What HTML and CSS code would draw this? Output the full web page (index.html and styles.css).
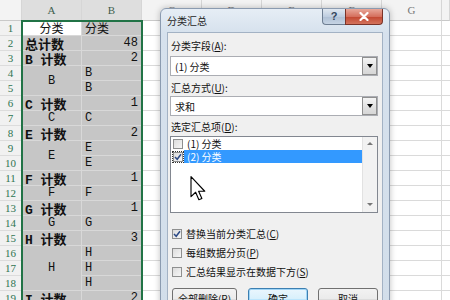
FILE: index.html
```html
<!DOCTYPE html>
<html lang="zh-CN">
<head>
  <meta charset="UTF-8">
  <title>分类汇总</title>
  <link rel="stylesheet" href="styles.css">
</head>
<body>
  <div class="sheet">
    <div class="hd corner"></div>
    <div class="hd on">A</div>
    <div class="hd on">B</div>
    <div class="hd">C</div>
    <div class="hd">D</div>
    <div class="hd">E</div>
    <div class="hd">F</div>
    <div class="hd">G</div>
    <div class="hd"></div>

    <div class="rest"></div>

    <div class="rn">1</div><div class="cell a act c">分类</div><div class="cell b">分类</div>
    <div class="rn">2</div><div class="cell a bold">总计数</div><div class="cell b r">48</div>
    <div class="rn">3</div><div class="cell a bold">B&nbsp;计数</div><div class="cell b r">2</div>
    <div class="rn">4</div><div class="cell a c span2">B</div><div class="cell b">B</div>
    <div class="rn">5</div><div class="cell b">B</div>
    <div class="rn">6</div><div class="cell a bold">C&nbsp;计数</div><div class="cell b r">1</div>
    <div class="rn">7</div><div class="cell a c">C</div><div class="cell b">C</div>
    <div class="rn">8</div><div class="cell a bold">E&nbsp;计数</div><div class="cell b r">2</div>
    <div class="rn">9</div><div class="cell a c span2">E</div><div class="cell b">E</div>
    <div class="rn">10</div><div class="cell b">E</div>
    <div class="rn">11</div><div class="cell a bold">F&nbsp;计数</div><div class="cell b r">1</div>
    <div class="rn">12</div><div class="cell a c">F</div><div class="cell b">F</div>
    <div class="rn">13</div><div class="cell a bold">G&nbsp;计数</div><div class="cell b r">1</div>
    <div class="rn">14</div><div class="cell a c">G</div><div class="cell b">G</div>
    <div class="rn">15</div><div class="cell a bold">H&nbsp;计数</div><div class="cell b r">3</div>
    <div class="rn">16</div><div class="cell a c span3">H</div><div class="cell b">H</div>
    <div class="rn">17</div><div class="cell b">H</div>
    <div class="rn">18</div><div class="cell b">H</div>
    <div class="rn">19</div><div class="cell a bold">I&nbsp;计数</div><div class="cell b r">2</div>

    <div class="selbox"></div>
  </div>

  <div class="dlg">
    <div class="cap">
      <span class="cap-title">分类汇总</span>
      <div class="cap-btns">
        <span class="cbtn help">?</span>
        <span class="cbtn close">
          <svg width="10" height="9" viewBox="0 0 10 9"><path d="M1.5 1 L8.5 8 M8.5 1 L1.5 8" stroke="#fff" stroke-width="2.2" stroke-linecap="round"/></svg>
        </span>
      </div>
    </div>

    <div class="client">
      <div class="lbl">分类字段(<u>A</u>):</div>
      <div class="combo"><span>(1) 分类</span><span class="drop"></span></div>

      <div class="lbl lbl2">汇总方式(<u>U</u>):</div>
      <div class="combo combo2"><span>求和</span><span class="drop"></span></div>

      <div class="lbl lbl3">选定汇总项(<u>D</u>):</div>
      <div class="list">
        <div class="items">
          <div class="item"><span class="chk"></span><span class="txt">(1) 分类</span></div>
          <div class="item selected">
            <span class="chk on focus"><svg width="8" height="8" viewBox="0 0 8 8"><path d="M1 4 L3.2 6.3 L7 1.2" fill="none" stroke="#2c4a86" stroke-width="1.5"/></svg></span>
            <span class="txt">(2) 分类</span>
          </div>
        </div>
        <div class="vscroll"><span class="arr up"></span><span class="arr down"></span></div>
      </div>

      <div class="opt opt1">
        <span class="chk on"><svg width="8" height="8" viewBox="0 0 8 8"><path d="M1 4 L3.2 6.3 L7 1.2" fill="none" stroke="#2c4a86" stroke-width="1.5"/></svg></span>
        <span>替换当前分类汇总(<u>C</u>)</span>
      </div>
      <div class="opt"><span class="chk"></span><span>每组数据分页(<u>P</u>)</span></div>
      <div class="opt"><span class="chk"></span><span>汇总结果显示在数据下方(<u>S</u>)</span></div>

      <div class="btns">
        <span class="btn wide">全部删除(<u>R</u>)</span>
        <span class="btn def">确定</span>
        <span class="btn">取消</span>
      </div>
    </div>
  </div>

  <svg class="cursor" width="17" height="25" viewBox="0 0 13 20">
    <path d="M0.5 0.5 L0.5 16.5 L4.2 13 L6.8 19 L9.2 18 L6.6 12.2 L11.5 12.2 Z" fill="#fff" stroke="#000" stroke-width="0.9" stroke-linejoin="round"/>
  </svg>
</body>
</html>
```

FILE: styles.css
```css
html, body {
  margin: 0;
  padding: 0;
}

body {
  position: relative;
  width: 450px;
  height: 300px;
  overflow: hidden;
  background: #fff;
  font-family: "Liberation Mono", "Noto Sans CJK SC", monospace;
}

/* ---- sheet ---- */

.sheet {
  position: relative;
  display: grid;
  grid-template-columns: 22px 60px 60px repeat(5, 60px) 1fr;
  grid-template-rows: 21px repeat(19, 15px);
}

.hd {
  box-sizing: border-box;
  background: #f3f3f3;
  border-right: 1px solid #d6d6d6;
  border-bottom: 1px solid #c9c9c9;
  font: 11px/20px "Liberation Serif", serif;
  color: #777;
  text-align: center;
}

.hd.on {
  background: #dedede;
  color: #3f5f4e;
}

.rest {
  grid-column: 4 / -1;
  grid-row: 2 / -1;
  background-color: #fff;
  background-image:
    repeating-linear-gradient(to bottom, transparent 0 14px, #dadada 14px 15px),
    repeating-linear-gradient(to right, transparent 0 59px, #dadada 59px 60px);
}

.rn {
  grid-column: 1;
  box-sizing: border-box;
  background: #f1f1f1;
  border-right: 1px solid #c9c9c9;
  border-bottom: 1px solid #dcdcdc;
  font: 11px/14px "Liberation Serif", serif;
  color: #2f7552;
  text-align: center;
}

.cell {
  box-sizing: border-box;
  display: flex;
  align-items: center;
  padding: 0 3px;
  background: #c6c6c6;
  border-right: 1px solid #d8d8d8;
  border-bottom: 1px solid #d8d8d8;
  font-size: 12px;
  white-space: nowrap;
  color: #111;
}

.cell.a { grid-column: 2; }
.cell.b { grid-column: 3; }
.cell.c { justify-content: center; }
.cell.r { justify-content: flex-end; }
.cell.bold { font-weight: bold; font-size: 13px; }
.cell.act { background: #fff; }
.cell.span2 { grid-row: span 2; }
.cell.span3 { grid-row: span 3; }

/* selection outline drawn over A1:B19 */
.selbox {
  position: absolute;
  left: 21px;
  top: 20px;
  width: 122px;
  height: 300px;
  box-sizing: border-box;
  border: 2px solid #217346;
  border-bottom: none;
  pointer-events: none;
}

/* ---- dialog ---- */

.dlg {
  position: absolute;
  left: 160px;
  top: 8px;
  width: 230px;
  height: 310px;
  box-sizing: border-box;
  padding: 0 6px;
  border: 1px solid #8b9bb0;
  border-radius: 6px 6px 0 0;
  background: linear-gradient(#e6edf5, #d6e1ed 24px, #d2deea);
  box-shadow: 0 0 6px rgba(0, 0, 0, 0.25);
  display: flex;
  flex-direction: column;
  font-family: "Noto Sans CJK SC", sans-serif;
  font-size: 10px;
  color: #111;
}

.cap {
  height: 23px;
  display: flex;
  justify-content: space-between;
  align-items: flex-start;
}

.cap-title {
  margin-top: 5px;
  line-height: 13px;
  color: #1e1e1e;
}

.cap-btns {
  display: flex;
}

.cbtn {
  box-sizing: border-box;
  height: 16px;
  display: flex;
  align-items: center;
  justify-content: center;
  border: 1px solid #6e7e92;
  border-top: none;
}

.help {
  width: 23px;
  border-right: none;
  border-radius: 0 0 0 4px;
  background: linear-gradient(#dfe7f0, #bfcee0 50%, #aebfd4 51%, #c6d4e4);
  font: bold 11px/1 "Liberation Sans", sans-serif;
  color: #33465c;
}

.close {
  width: 38px;
  border-color: #7a3328;
  border-radius: 0 0 4px 0;
  background: linear-gradient(#e8a89a, #d5705e 50%, #c24630 51%, #d3735c);
}

.client {
  flex: 1;
  display: flex;
  flex-direction: column;
  padding: 6px 4px 0 2px;
  border: 1px solid #a3b2c4;
  background: #f0f0f0;
}

.lbl {
  line-height: 13px;
  padding-left: 1px;
}

.lbl2 { margin-top: 5px; }
.lbl3 { margin-top: 4px; }

.combo {
  box-sizing: border-box;
  height: 20px;
  margin-top: 4px;
  padding-left: 4px;
  display: flex;
  align-items: center;
  border: 1px solid #abadb3;
  background: #fff;
}

.combo2 { margin-top: 2px; }

.drop {
  box-sizing: border-box;
  width: 15px;
  height: 18px;
  margin-left: auto;
  display: flex;
  align-items: center;
  justify-content: center;
  border: 1px solid #8f8f8f;
  background: linear-gradient(#f4f4f4, #e3e3e3 50%, #d6d6d6);
}

.drop::after {
  content: "";
  border-left: 3.5px solid transparent;
  border-right: 3.5px solid transparent;
  border-top: 4px solid #000;
}

.list {
  box-sizing: border-box;
  height: 77px;
  margin-top: 3px;
  display: flex;
  border: 1px solid #828790;
  background: #fff;
}

.items {
  flex: 1;
}

.item {
  height: 13px;
  display: flex;
  align-items: center;
}

.item .chk {
  margin-left: 2px;
}

.txt {
  flex: 1;
  height: 13px;
  line-height: 13px;
  margin-left: 1px;
  padding-left: 3px;
}

.item.selected .txt {
  background: #3399ff;
  color: #fff;
}

.chk {
  box-sizing: border-box;
  width: 10px;
  height: 10px;
  display: flex;
  align-items: center;
  justify-content: center;
  border: 1px solid #8e8f8f;
  background: linear-gradient(135deg, #dcdcdc, #f6f6f6);
}

.chk.focus {
  outline: 1px dotted #333;
  outline-offset: 0;
}

.vscroll {
  width: 14px;
  display: flex;
  flex-direction: column;
  align-items: center;
  justify-content: space-between;
  padding: 5px 0 6px;
  border-left: 1px solid #e2e2e2;
  background: #f2f2f2;
}

.arr {
  border-left: 3px solid transparent;
  border-right: 3px solid transparent;
}

.arr.up { border-bottom: 3px solid #777; }
.arr.down { border-top: 3px solid #777; }

.opt {
  height: 13px;
  margin-top: 6px;
  display: flex;
  align-items: center;
  gap: 4px;
  padding-left: 2px;
  line-height: 13px;
}

.opt1 { margin-top: 14px; }

.btns {
  margin-top: 10px;
  padding-left: 2px;
  display: flex;
  gap: 10px;
}

.btn {
  box-sizing: border-box;
  width: 60px;
  height: 21px;
  display: flex;
  align-items: center;
  justify-content: center;
  border: 1px solid #707070;
  border-radius: 3px;
  background: linear-gradient(#f2f2f2, #ebebeb 50%, #dddddd 51%, #cfcfcf);
}

.btn.wide {
  width: 65px;
  margin-right: 1px;
}

.btn.def {
  border-color: #3c7fb1;
  box-shadow: inset 0 0 0 1px #9fd5f7;
  background: linear-gradient(#eaf6fd, #d9f0fc 50%, #bee6fd 51%, #a7d9f5);
}

.cursor {
  position: absolute;
  left: 190px;
  top: 176px;
}
```
